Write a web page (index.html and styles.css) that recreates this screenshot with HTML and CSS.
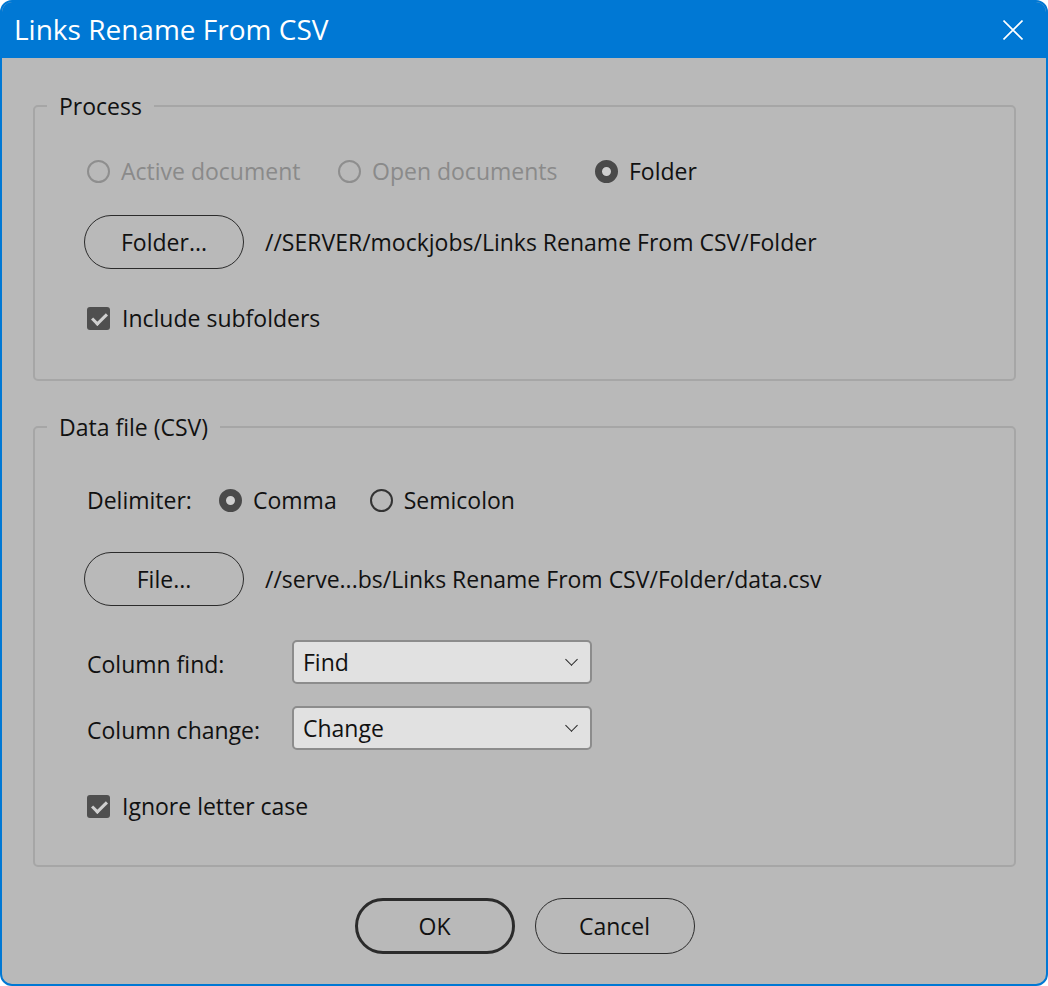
FILE: index.html
```html
<!DOCTYPE html>
<html lang="en">
<head>
  <meta charset="UTF-8" />
  <title>Links Rename From CSV</title>
  <link rel="stylesheet" href="styles.css">
</head>
<body>

  <div class="window">
    <div class="titlebar">
      <span class="title">Links Rename From CSV</span>
      <button class="close" aria-label="Close">
        <svg width="20" height="20" viewBox="0 0 20 20">
          <path d="M0.5 0.5 L19.5 19.5 M19.5 0.5 L0.5 19.5" stroke="#fff" stroke-width="1.6" fill="none" />
        </svg>
      </button>
    </div>

    <div class="content">
      <fieldset class="panel">
        <legend>Process</legend>
        <div class="panel-body process">
          <div class="row radios">
            <label class="radio disabled"><span class="dot"></span>Active document</label>
            <label class="radio disabled"><span class="dot"></span>Open documents</label>
            <label class="radio checked"><span class="dot"></span>Folder</label>
          </div>
          <div class="row pick">
            <button class="pill">Folder...</button>
            <span class="path">//SERVER/mockjobs/Links Rename From CSV/Folder</span>
          </div>
          <label class="row check"><span class="box"></span>Include subfolders</label>
        </div>
      </fieldset>

      <fieldset class="panel">
        <legend>Data file (CSV)</legend>
        <div class="panel-body data">
          <div class="row delim">
            <span class="delim-label">Delimiter:</span>
            <label class="radio checked"><span class="dot"></span>Comma</label>
            <label class="radio"><span class="dot"></span>Semicolon</label>
          </div>
          <div class="row pick">
            <button class="pill">File...</button>
            <span class="path">//serve...bs/Links Rename From CSV/Folder/data.csv</span>
          </div>
          <div class="row field">
            <span class="field-label">Column find:</span>
            <div class="select">Find<span class="chev"></span></div>
          </div>
          <div class="row field second">
            <span class="field-label">Column change:</span>
            <div class="select">Change<span class="chev"></span></div>
          </div>
          <label class="row check"><span class="box"></span>Ignore letter case</label>
        </div>
      </fieldset>

      <div class="footer">
        <button class="pill default">OK</button>
        <button class="pill">Cancel</button>
      </div>
    </div>
  </div>

</body>
</html>
```

FILE: styles.css
```css
* {
  box-sizing: border-box;
}

body {
  margin: 0;
  font-family: "Open Sans", "Noto Sans", sans-serif;
  background: #fff;
}

.window {
  width: 1048px;
  height: 986px;
  border: 2px solid #0078d4;
  border-radius: 12px;
  background: #b9b9b9;
  overflow: hidden;
  display: flex;
  flex-direction: column;
  color: #111;
  font-size: 23px;
}

.titlebar {
  height: 56px;
  background: #0078d4;
  color: #fff;
  display: flex;
  align-items: center;
  justify-content: space-between;
  padding: 0 23px 0 12px;
}

.title {
  font-size: 28px;
  margin-top: -2px;
}

.close {
  background: none;
  border: none;
  padding: 0;
  width: 20px;
  height: 20px;
  display: flex;
  margin-top: -1px;
}

.content {
  flex-grow: 1;
  padding: 33px 30px 0 31px;
}

.panel {
  margin: 0;
  padding: 0;
  border: 2px solid #a6a6a6;
  border-radius: 5px;
  min-width: 0;
}

.panel + .panel {
  margin-top: 31px;
}

.panel legend {
  margin-left: 12px;
  padding: 0 12px;
  line-height: 30px;
  font-size: 23px;
}

.panel-body {
  padding-left: 49px;
  display: flex;
  flex-direction: column;
}

.process {
  padding-top: 35px;
  height: 258px;
}

.data {
  padding-top: 43px;
  height: 423px;
}

.row {
  display: flex;
  align-items: center;
  height: 30px;
}

.radio {
  display: flex;
  align-items: center;
  white-space: nowrap;
}

.radios .radio {
  margin-left: 3px;
  width: 251px;
}

.radios .radio:nth-child(2) {
  margin-left: 0;
  width: 254px;
}

.dot {
  width: 23px;
  height: 23px;
  border: 2px solid #333;
  border-radius: 50%;
  margin-right: 11px;
  flex-shrink: 0;
}

.radio.disabled {
  color: #8a8a8a;
}

.radio.disabled .dot {
  border-color: #8e8e8e;
}

.radio.checked .dot {
  border: 7px solid #4a4a4a;
  background: #cfcfcf;
}

.delim-label {
  width: 132px;
  margin-left: 3px;
}

.delim .radio {
  margin-right: 33px;
}

.pick {
  height: 54px;
  margin-top: 29px;
}

.data .pick {
  margin-top: 37px;
}

.pill {
  font-family: inherit;
  font-size: 23px;
  color: #111;
  background: transparent;
  width: 160px;
  height: 54px;
  border: 1.5px solid #2b2b2b;
  border-radius: 27px;
  padding: 0;
  margin-right: 21px;
}

.path {
  white-space: nowrap;
}

.check {
  margin-top: 34px;
  margin-left: 3px;
}

.box {
  width: 23px;
  height: 23px;
  border-radius: 3px;
  background: #4f4f4f;
  margin-right: 12px;
  position: relative;
}

.box::after {
  content: "";
  position: absolute;
  left: 8px;
  top: 3px;
  width: 6px;
  height: 12px;
  border: solid #d0d0d0;
  border-width: 0 3px 3px 0;
  transform: rotate(45deg);
}

.field {
  height: 44px;
  margin-top: 34px;
}

.field.second {
  margin-top: 22px;
}

.field-label {
  width: 205px;
  margin-left: 3px;
  padding-top: 4px;
}

.select {
  width: 300px;
  height: 44px;
  flex-shrink: 0;
  background: #e1e1e1;
  border: 2px solid #8c8c8c;
  border-radius: 5px;
  display: flex;
  align-items: center;
  justify-content: space-between;
  padding: 0 14px 0 9px;
}

.chev {
  width: 9px;
  height: 9px;
  border: solid #222;
  border-width: 0 1.6px 1.6px 0;
  transform: rotate(45deg);
  margin-top: -5px;
}

.data .check {
  margin-top: 41px;
}

.footer {
  display: flex;
  justify-content: center;
  gap: 20px;
  padding-top: 31px;
}

.footer .pill {
  height: 56px;
  margin-right: 0;
  border-radius: 28px;
}

.footer .pill.default {
  border-width: 3px;
}
```
